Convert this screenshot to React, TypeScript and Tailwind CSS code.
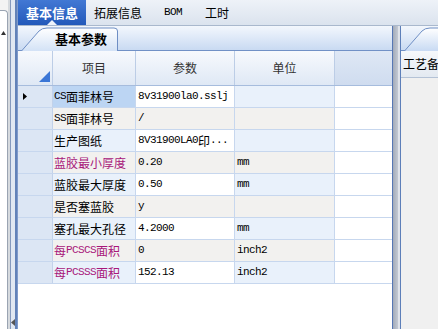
import { Fragment } from "react";

type Row = { name: string; value: string; unit: string; pink?: boolean };

const rows: Row[] = [
  { name: "CS面菲林号", value: "8v31900la0.sslj", unit: "" },
  { name: "SS面菲林号", value: "/", unit: "" },
  { name: "生产图纸", value: "8V31900LA0印...", unit: "" },
  { name: "蓝胶最小厚度", value: "0.20", unit: "mm", pink: true },
  { name: "蓝胶最大厚度", value: "0.50", unit: "mm" },
  { name: "是否塞蓝胶", value: "y", unit: "" },
  { name: "塞孔最大孔径", value: "4.2000", unit: "mm" },
  { name: "每PCSCS面积", value: "0", unit: "inch2", pink: true },
  { name: "每PCSSS面积", value: "152.13", unit: "inch2", pink: true },
];

// ascii runs get the narrow mono face, like SimSun's half-width glyphs
const Mixed = ({ text }: { text: string }) => (
  <>
    {text
      .split(/([\x20-\x7e]+)/)
      .filter(Boolean)
      .map((part, i) =>
        /^[\x20-\x7e]+$/.test(part) ? (
          <span key={i} className="font-['Liberation_Mono',monospace] text-[11px] tracking-[-0.6px]">
            {part}
          </span>
        ) : (
          <Fragment key={i}>{part}</Fragment>
        )
      )}
  </>
);

const TabShape = ({ id }: { id: string }) => (
  <svg className="absolute inset-0" width="98" height="24" viewBox="0 0 98 24">
    <defs>
      <linearGradient id={id} x1="0" y1="0" x2="0" y2="1">
        <stop offset="0" stopColor="#ffffff" />
        <stop offset="1" stopColor="#d3e2f6" />
      </linearGradient>
    </defs>
    <path d="M0.5 24 L18 4 Q21 1 26 1 L93 1 Q96.5 1 96.5 4 L96.5 24" fill={`url(#${id})`} stroke="#6e8ec4" />
  </svg>
);

export default function App() {
  return (
    <div className="flex h-[329px] w-[438px] overflow-hidden bg-[#f3f3f3] font-['Noto_Sans_CJK_SC','Liberation_Sans',sans-serif] text-[12px] text-black">
      {/* collapsed left panel */}
      <div className="flex w-[8px] shrink-0 flex-col">
        <div className="relative mt-[10px] flex-1 rounded-tr-[4px] border-r border-t border-[#9aa4b2] bg-white">
          <svg className="absolute left-[1px] top-[20px]" width="5" height="4" viewBox="0 0 5 4">
            <path d="M2.5 0 L5 4 L0 4 Z" fill="#333" />
          </svg>
        </div>
      </div>
      <div className="relative flex w-[10px] shrink-0">
        <div className="w-[2px] bg-[#d6dade]" />
        <div className="w-[1px] bg-[#8499bd]" />
        <div className="w-[4px] bg-[#e1e8f2]" />
        <div className="w-[2px] bg-[#6282b8]" />
        <div className="w-[1px] bg-[#7f9acb]" />
        <svg className="absolute left-[3px] bottom-[3px]" width="4" height="7" viewBox="0 0 4 7">
          <path d="M4 0 L0 3.5 L4 7 Z" fill="#555" />
        </svg>
      </div>

      <div className="flex min-w-0 flex-1 flex-col">
        {/* top tab bar */}
        <div className="flex h-[26px] shrink-0 items-stretch border-b border-[#a9b8cd] bg-gradient-to-b from-[#eef2f8] to-[#dbe3ee]">
          <div className="relative flex w-[68px] shrink-0 items-center justify-center bg-gradient-to-b from-[#4278d4] to-[#2359ba] text-[13px] font-bold text-white">
            基本信息
            <svg className="absolute bottom-0 left-[29px]" width="10" height="5" viewBox="0 0 10 5">
              <path d="M5 0 L10 5 L0 5 Z" fill="#eef3fb" />
            </svg>
          </div>
          <div className="flex w-[70px] shrink-0 items-center pl-[8px]">拓展信息</div>
          <div className="flex w-[40px] shrink-0 items-center pl-[8px] font-['Liberation_Mono',monospace] text-[11px] tracking-[-0.6px]">
            BOM
          </div>
          <div className="flex items-center pl-[9px]">工时</div>
        </div>

        <div className="flex min-h-0 flex-1">
          {/* centre panel */}
          <div className="flex w-[374px] shrink-0 flex-col bg-white">
            <div className="flex h-[25px] shrink-0 border-b border-[#7191c6] bg-gradient-to-b from-[#f3f7fd] to-[#c9daf2] pl-[3px] pt-[1px]">
              <div className="relative flex h-[24px] w-[98px] items-center justify-center pl-[22px] text-[13px] font-bold">
                <TabShape id="tabA" />
                <span className="relative">基本参数</span>
              </div>
            </div>

            {/* grid header */}
            <div className="flex h-[35px] shrink-0 border-b border-[#a6bcdd] bg-gradient-to-b from-[#f7f9fd] to-[#dfe8f5] text-[#333]">
              <div className="relative w-[35px] shrink-0 border-r border-[#bccde6]">
                <svg className="absolute bottom-[3px] right-[2px]" width="11" height="11" viewBox="0 0 11 11">
                  <path d="M11 0 L11 11 L0 11 Z" fill="#3b76d6" />
                </svg>
              </div>
              <div className="flex w-[83px] shrink-0 items-center justify-center border-r border-[#bccde6]">项目</div>
              <div className="flex w-[99px] shrink-0 items-center justify-center border-r border-[#bccde6]">参数</div>
              <div className="flex w-[100px] shrink-0 items-center justify-center border-r border-[#bccde6]">单位</div>
              <div className="min-w-0 flex-1 bg-gradient-to-b from-[#dfe8f5] to-[#cfdcef]" />
            </div>

            {rows.map((r, i) => {
              const odd = i % 2 === 0;
              const side = odd ? "bg-[#e9f1fb]" : "bg-[#f2f1ef]";
              return (
                <div key={r.name} className="flex h-[22px] shrink-0 border-b border-[#c7d7ee]">
                  <div className="flex w-[35px] shrink-0 items-center border-r border-[#c2d2ea] bg-[#dce6f4] pl-[5px]">
                    {i === 0 && (
                      <svg width="4" height="7" viewBox="0 0 4 7">
                        <path d="M0 0 L4 3.5 L0 7 Z" fill="#000" />
                      </svg>
                    )}
                  </div>
                  <div
                    className={`flex w-[83px] shrink-0 items-center overflow-hidden whitespace-nowrap border-r border-[#c7d7ee] pl-[1px] ${
                      i === 0 ? "bg-[#bcd5f3]" : side
                    } ${r.pink ? "text-[#a8177a]" : "text-black"}`}
                  >
                    <Mixed text={r.name} />
                  </div>
                  <div
                    className={`flex w-[99px] shrink-0 items-center overflow-hidden whitespace-nowrap border-r border-[#c7d7ee] pl-[2px] ${
                      odd ? "bg-white" : "bg-[#f2f1ef]"
                    }`}
                  >
                    <Mixed text={r.value} />
                  </div>
                  <div className={`flex w-[100px] shrink-0 items-center border-r border-[#c7d7ee] pl-[2px] ${side}`}>
                    <Mixed text={r.unit} />
                  </div>
                  <div className="min-w-0 flex-1 bg-white" />
                </div>
              );
            })}
            <div className="flex-1 bg-white" />
          </div>

          {/* splitter */}
          <div className="flex w-[9px] shrink-0">
            <div className="w-[1px] bg-[#5677b4]" />
            <div className="w-[5px] bg-gradient-to-r from-[#a3abb9] to-[#c3c9d3]" />
            <div className="w-[2px] bg-[#dfe3ea]" />
            <div className="w-[1px] bg-[#5d7fb9]" />
          </div>

          {/* right panel */}
          <div className="flex min-w-0 flex-1 flex-col overflow-hidden bg-[#f0f0f0]">
            <div className="relative h-[25px] shrink-0 border-b border-[#7191c6] bg-gradient-to-b from-[#f3f7fd] to-[#c9daf2]">
              <svg className="absolute left-[3px] top-[1px]" width="40" height="24" viewBox="0 0 40 24">
                <defs>
                  <linearGradient id="tabB" x1="0" y1="0" x2="0" y2="1">
                    <stop offset="0" stopColor="#ffffff" />
                    <stop offset="1" stopColor="#c8daf3" />
                  </linearGradient>
                </defs>
                <path d="M0.5 24 L18 4 Q21 1 26 1 L40 1 L40 24" fill="url(#tabB)" stroke="#6e8ec4" />
              </svg>
            </div>
            <div className="flex h-[27px] shrink-0 items-center whitespace-nowrap border-b border-[#b4c2d6] bg-gradient-to-b from-[#f6f8fb] to-[#e3e9f1] pl-[2px] text-[12px]">
              工艺备
            </div>
          </div>
        </div>
      </div>
    </div>
  );
}
